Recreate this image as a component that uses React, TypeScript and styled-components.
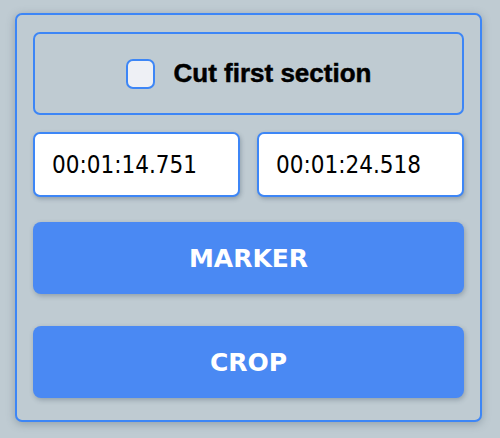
import React, { useState } from 'react';
import styled, { createGlobalStyle } from 'styled-components';

const GlobalStyle = createGlobalStyle`
  html, body {
    margin: 0;
    padding: 0;
    background: #bfcbd2;
  }
`;

const Page = styled.div`
  padding: 13px 18px 16px 15px;
  background: #bfcbd2;
  min-height: 438px;
  box-sizing: border-box;
`;

const Panel = styled.div`
  width: 467px;
  height: 409px;
  box-sizing: border-box;
  border: 2px solid #3d86f6;
  border-radius: 7px;
  background: #bfcbd2;
  box-shadow: 0 2px 8px rgba(60, 80, 95, 0.35);
  padding: 17px 16px 16px 16px;
  display: flex;
  flex-direction: column;
`;

const CheckRow = styled.label`
  height: 83px;
  box-sizing: border-box;
  border: 2px solid #3d86f6;
  border-radius: 7px;
  display: flex;
  align-items: center;
  justify-content: center;
  gap: 19px;
  cursor: pointer;
`;

const Box = styled.span<{ checked: boolean }>`
  width: 29px;
  height: 30px;
  box-sizing: border-box;
  border: 2px solid #3d86f6;
  border-radius: 7px;
  background: ${p => (p.checked ? '#3d86f6' : '#eef0f5')};
`;

const CheckLabel = styled.span`
  font-family: 'Liberation Sans', Arial, sans-serif;
  font-weight: 700;
  font-size: 26px;
  color: #000;
  -webkit-text-stroke: 0.5px #000;
`;

const TimeRow = styled.div`
  display: grid;
  grid-template-columns: 1fr 1fr;
  gap: 17px;
  margin-top: 17px;
`;

const TimeInput = styled.input`
  height: 65px;
  box-sizing: border-box;
  border: 2px solid #3d86f6;
  border-radius: 7px;
  background: #fff;
  padding: 0 0 0 17px;
  font-family: 'DejaVu Sans Condensed', 'DejaVu Sans', sans-serif;
  font-size: 24px;
  color: #000;
  box-shadow: 1px 2px 4px rgba(40, 60, 80, 0.3);
  outline: none;
  width: 100%;
`;

const ActionButton = styled.button<{ gapTop: number }>`
  margin-top: ${p => p.gapTop}px;
  height: 72px;
  border: none;
  border-radius: 8px;
  background: #4a89f3;
  color: #fff;
  font-family: 'DejaVu Sans', Verdana, sans-serif;
  font-weight: 700;
  font-size: 25px;
  box-shadow: 1px 2px 5px rgba(40, 60, 80, 0.3);
  cursor: pointer;
`;

export default function App() {
  const [cutFirst, setCutFirst] = useState(false);
  const [start, setStart] = useState('00:01:14.751');
  const [end, setEnd] = useState('00:01:24.518');

  return (
    <>
      <GlobalStyle />
      <Page>
        <Panel>
          <CheckRow onClick={() => setCutFirst(!cutFirst)}>
            <Box checked={cutFirst} />
            <CheckLabel>Cut first section</CheckLabel>
          </CheckRow>
          <TimeRow>
            <TimeInput value={start} onChange={e => setStart(e.target.value)} />
            <TimeInput value={end} onChange={e => setEnd(e.target.value)} />
          </TimeRow>
          <ActionButton gapTop={25}>MARKER</ActionButton>
          <ActionButton gapTop={32}>CROP</ActionButton>
        </Panel>
      </Page>
    </>
  );
}
